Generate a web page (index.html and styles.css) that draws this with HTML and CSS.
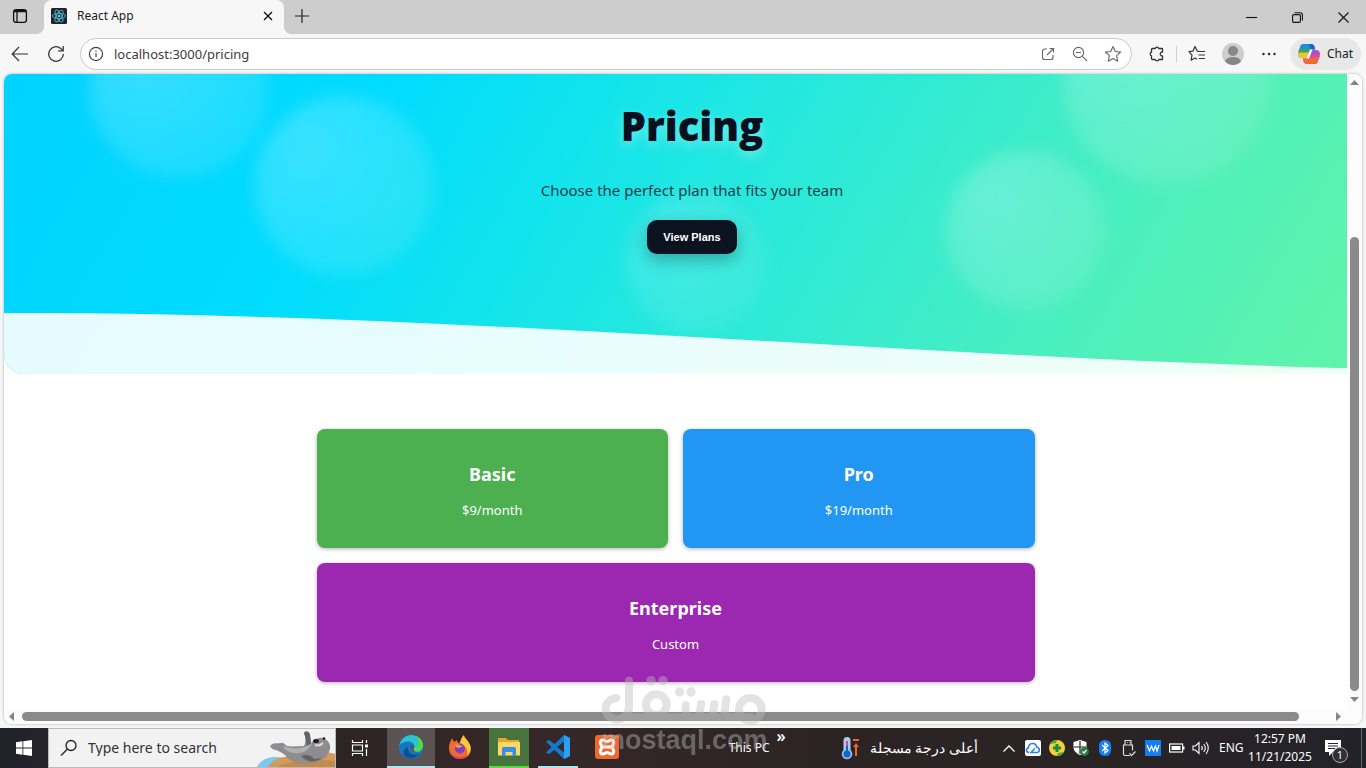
FILE: index.html
```html
<!DOCTYPE html>
<html lang="en">
<head>
<meta charset="utf-8">
<title>React App</title>
<link rel="stylesheet" href="styles.css">
</head>
<body>
<header class="tabstrip">
  <button class="tab-actions" aria-label="Tab actions">
    <svg width="16" height="16" viewBox="0 0 16 16" fill="none" stroke="#111" stroke-width="1.3"><rect x="1.6" y="1.6" width="12.8" height="12.8" rx="2.4"/><path d="M2 3.5h12M5 4v10" /><path d="M2 3h12" stroke-width="2"/></svg>
  </button>
  <div class="tab">
    <svg width="16" height="16" viewBox="0 0 16 16"><rect width="16" height="16" rx="1.5" fill="#20232a"/><g fill="none" stroke="#4fb6cf" stroke-width=".9"><ellipse cx="8" cy="8" rx="6.6" ry="2.6"/><ellipse cx="8" cy="8" rx="6.6" ry="2.6" transform="rotate(60 8 8)"/><ellipse cx="8" cy="8" rx="6.6" ry="2.6" transform="rotate(120 8 8)"/></g><circle cx="8" cy="8" r="1.3" fill="#61dafb"/></svg>
    <span class="tab-title">React App</span>
    <button class="tab-close" aria-label="Close tab"><svg width="10" height="10" viewBox="0 0 10 10" stroke="#111" stroke-width="1.4"><path d="M1 1l8 8M9 1L1 9"/></svg></button>
  </div>
  <button class="new-tab" aria-label="New tab"><svg width="14" height="14" viewBox="0 0 14 14" stroke="#222" stroke-width="1.2"><path d="M7 0v14M0 7h14"/></svg></button>
  <div class="window-buttons">
    <button aria-label="Minimize"><svg width="11" height="11" viewBox="0 0 11 11" stroke="#111" stroke-width="1.1"><path d="M0 5.5h11"/></svg></button>
    <button aria-label="Restore"><svg width="11" height="11" viewBox="0 0 11 11" fill="none" stroke="#111" stroke-width="1.1"><rect x=".6" y="2.6" width="7.8" height="7.8" rx="1.2"/><path d="M2.6 .8h5.6a2.2 2.2 0 0 1 2.2 2.2v5.4"/></svg></button>
    <button aria-label="Close"><svg width="11" height="11" viewBox="0 0 11 11" stroke="#111" stroke-width="1.1"><path d="M.5 .5l10 10M10.500 .5l-10 10"/></svg></button>
  </div>
</header>

<nav class="toolbar" aria-label="Browser toolbar">
  <button class="nav-button" aria-label="Back"><svg width="18" height="18" viewBox="0 0 18 18" fill="none" stroke="#333" stroke-width="1.2"><path d="M17 9H1.500M8 2L1.200 9L8 16"/></svg></button>
  <button class="nav-button" aria-label="Refresh"><svg width="18" height="18" viewBox="0 0 18 18" fill="none" stroke="#333" stroke-width="1.3"><path d="M16.300 9a7.300 7.300 0 1 1-2.600-5.600L16 5.600"/><path d="M16.200 1v4.900h-5"/></svg></button>
  <div class="address">
    <svg width="16" height="16" viewBox="0 0 16 16" fill="none" stroke="#444" stroke-width="1.200"><circle cx="8" cy="8" r="6.600"/><path d="M8 7v4.200M8 4.400v1.400"/></svg>
    <input class="address-input" type="text" aria-label="Address" value="localhost:3000/pricing">
    <button aria-label="Open in app"><svg width="16" height="16" viewBox="0 0 16 16" fill="none" stroke="#666" stroke-width="1.100"><path d="M7 3H4.500A2 2 0 0 0 2.500 5v6.500a2 2 0 0 0 2 2H11a2 2 0 0 0 2-2V9M9.500 2.500H13.500V6.500M13.500 2.500L7 9"/></svg></button>
    <button aria-label="Zoom"><svg width="16" height="16" viewBox="0 0 16 16" fill="none" stroke="#666" stroke-width="1.100"><circle cx="6.500" cy="6.500" r="5.100"/><path d="M4 6.500h5M10.300 10.300L15 15"/></svg></button>
    <button aria-label="Add to favorites"><svg width="18" height="18" viewBox="0 0 18 18" fill="none" stroke="#666" stroke-width="1.100" stroke-linejoin="round"><path d="M9 1.500l2.300 5 5.300.600-4 3.600 1.100 5.500L9 13.500l-4.700 2.700 1.100-5.500-4-3.600 5.300-.600z"/></svg></button>
  </div>
  <button class="tool" aria-label="Extensions"><svg width="18" height="18" viewBox="0 0 18 18" fill="none" stroke="#333" stroke-width="1.300" stroke-linejoin="round"><path d="M4.500 3.500h2.700a1.900 1.900 0 0 1 3.600 0h3.700v3.700h-1a1.900 1.900 0 0 0 0 3.600h1v3.700h-3.700a1.900 1.900 0 0 1-3.600 0H4.500a1 1 0 0 1-1-1v-2.700a1.900 1.900 0 0 1 0-3.600V4.500a1 1 0 0 1 1-1z"/></svg></button>
  <span class="divider"></span>
  <button class="tool" aria-label="Favorites"><svg width="18" height="18" viewBox="0 0 18 18" fill="none" stroke="#333" stroke-width="1.200" stroke-linejoin="round"><path d="M11.500 6.500L9.300 6.200 7 1.500 4.900 6.200 1 6.700l3 3.500-.9 5L7 13l2 1.200M11 6.500h6M10.500 10h6.500M11 13.500h6"/></svg></button>
  <button class="tool" aria-label="Profile"><svg width="22" height="22" viewBox="0 0 22 22"><circle cx="11" cy="11" r="11" fill="#cdcdcd"/><circle cx="11" cy="8" r="5" fill="#878787"/><path d="M3 18.500c1-6 15-6 16 0a11 11 0 0 1-16 0z" fill="#878787"/></svg></button>
  <button class="tool" aria-label="Settings and more"><svg width="14" height="4" viewBox="0 0 14 4" fill="#222"><circle cx="1.500" cy="2" r="1.200"/><circle cx="7" cy="2" r="1.200"/><circle cx="12.500" cy="2" r="1.200"/></svg></button>
  <button class="chat">
    <svg width="22" height="20" viewBox="0 0 22 20"><path d="M5.500 0H13c2 0 3 1 3.500 3l.7 2.500H13L10 14H4c-3.500 0-4.600-2.500-3.600-6L2 3C2.500 1 3.500 0 5.500 0z" fill="#1c8fd6"/><path d="M1.500 5h10.800l-1 3.500H.3z" fill="#35a65a"/><path d="M.3 8.500h11L9.700 14H4c-3 0-4.400-2-3.700-5.500z" fill="#efc42f"/><path d="M11 0h2c2 0 3 1 3.500 3l.7 2.500H13z" fill="#1268c4"/><path d="M16.500 20H9c-2 0-3-1-3.500-3L4.800 14.500H9L12 6h6c3.500 0 4.600 2.500 3.600 6L20 17c-.5 2-1.500 3-3.500 3z" fill="#b650c4"/><path d="M4.800 14.500H9l1-2.500h11.600L20 17c-.5 2-1.500 3-3.500 3H9c-2 0-3-1-3.500-3z" fill="#ef6a35"/><path d="M11 11.500h10.700l-.6 2.500H10z" fill="#e0508c"/><path d="M8.500 14.500l3.500-9h2.500L11 14.500z" fill="#fff"/></svg>
    Chat
  </button>
</nav>

<div class="frame">
  <div class="page">
    <section class="hero">
      <span class="bubble bubble-a"></span>
      <span class="bubble bubble-b"></span>
      <span class="bubble bubble-c"></span>
      <span class="bubble bubble-d"></span>
      <span class="bubble bubble-e"></span>
      <svg class="wave" viewBox="0 0 1376 61" preserveAspectRatio="none"><path d="M0 0C459 -1 917 46 1376 56V61H0z" fill="#fff" fill-opacity=".9"/></svg>
      <div class="hero-content">
        <h1 class="hero-title">Pricing</h1>
        <p class="hero-text">Choose the perfect plan that fits your team</p>
        <button class="hero-button">View Plans</button>
      </div>
    </section>
    <main class="plans">
      <article class="plan plan-basic"><h2 class="plan-name">Basic</h2><p class="plan-price">$9/month</p></article>
      <article class="plan plan-pro"><h2 class="plan-name">Pro</h2><p class="plan-price">$19/month</p></article>
      <article class="plan plan-enterprise"><h2 class="plan-name">Enterprise</h2><p class="plan-price">Custom</p></article>
    </main>
  </div>
  <div class="vbar">
    <svg width="9" height="5" viewBox="0 0 9 5" fill="#858585"><path d="M0 5L4.500 0L9 5z"/></svg>
    <div class="vtrack"><div class="vthumb"></div></div>
    <svg width="9" height="5" viewBox="0 0 9 5" fill="#858585"><path d="M0 0L4.500 5L9 0z"/></svg>
  </div>
  <div class="hbar">
    <svg width="5" height="9" viewBox="0 0 5 9" fill="#858585"><path d="M5 0L0 4.500L5 9z"/></svg>
    <div class="htrack"><div class="hthumb"></div></div>
    <svg width="5" height="9" viewBox="0 0 5 9" fill="#858585"><path d="M0 0L5 4.500L0 9z"/></svg>
  </div>
</div>

<footer class="taskbar">
  <button class="task-slot" aria-label="Start"><svg width="16" height="16" viewBox="0 0 16 16" fill="#fff"><path d="M0 2.200L6.500 1.300V7.600H0zM7.300 1.200L16 0V7.600H7.300zM0 8.400H6.500V14.700L0 13.800zM7.300 8.400H16V16L7.300 14.800z"/></svg></button>
  <label class="search">
    <svg width="18" height="18" viewBox="0 0 18 18" fill="none" stroke="#222" stroke-width="1.300"><circle cx="11" cy="6.500" r="5"/><path d="M7.300 10.200L1 16.500"/></svg>
    <input class="search-input" type="text" aria-label="Search" placeholder="Type here to search">
    <svg width="80" height="38" viewBox="0 0 80 38">
      <path d="M2 38c4-8 14-12 26-9l6 9z" fill="#7cc8ee"/><path d="M13 38c5-9 16-12 32-10 10-3 24-7 35-3v13z" fill="#d29a5c"/><path d="M22 38c10-6 38-8 58-6v6z" fill="#c38a48"/>
      <path d="M15 17c3-4 8-2 11-3 2-1 3 1 6 3 6 1 12 0 17 0 2-4 2-8 0-13 2-3 6-1 6 2l1 8c3-3 7-6 12-5 5 2 8 6 7 11-2 9-11 14-22 14-9 1-18-1-23-8-4-3-7-4-9-5-3 0-5-2-6-4z" fill="#8d8d8f"/>
      <path d="M28 17c10 4 22 3 29-3-3 8-10 11-17 10-6 0-10-3-12-7z" fill="#b0b0b1"/><path d="M49 4c2-3 6-1 6 2l1 8-4 3c-1-4-1-8-3-13z" fill="#626267"/><path d="M46 27c6-2 10-1 13 3l8-1c-6 4-14 6-21-2z" fill="#626267"/>
      <ellipse cx="61" cy="12" rx="3" ry="2" fill="#222"/><circle cx="69" cy="9.500" r="1.200" fill="#111"/><path d="M60 16c3 1 5 1 8-2" fill="none" stroke="#ead8cf" stroke-width="2"/>
    </svg>
  </label>
  <button class="task-slot" aria-label="Task view"><svg width="18" height="16" viewBox="0 0 18 16" fill="none" stroke="#fff" stroke-width="1.200"><path d="M1.500 0v2.500h10V0M1.500 16v-2.500h10V16M1.500 5h10v6h-10zM15.500 0v3M15.500 9v7"/><path d="M14 4.500h3v3h-3z" fill="#fff" stroke="none"/></svg></button>
  <div class="apps">
    <button class="app app-edge" aria-label="Microsoft Edge"><svg width="24" height="24" viewBox="0 0 24 24"><circle cx="12" cy="12" r="12" fill="#1577c9"/><path d="M.3 11C2 3 8-.5 14 .2c6 .8 10 5.300 10 10.300 0 4-3 6.500-7 6-3-.500-3-2-2-3.500 1.500-4-2-6.500-6-6.500C5 6.500 1.500 8 .3 11z" fill="#2cc3d5"/><path d="M17 1c4.500 2 7 5.500 7 9.500 0 4-3 6.500-7 6-2.500-.400-3-2-2-3.500 5 0 6-7 2-12z" fill="#55d84a"/><path d="M9 12c-1 5 4 9 10 7l2-1c-4 6-11 7-15 3-3-4-1-8 3-9z" fill="#124f8d"/><path d="M12 10c3 0 3.500 2 2.700 3.500-.7 1.500 0 2.700 1.500 3-3 .8-6-2-4.200-6.500z" fill="#5b5254"/></svg></button>
    <button class="app" aria-label="Firefox"><svg width="24" height="24" viewBox="0 0 24 24"><path d="M1 13C1 8 3 6 4 3l2 4 3-2c0 2 1 3 3 3 1-4 2-6 4-8 0 3 3 4 5 8 5 7 0 16-9 16C5 24 1 19 1 13z" fill="#f26a2e"/><path d="M16 0c0 3 3 4 5 8 3 5 1 10-2 13 1-5 0-8-3-10l-4-3c1-4 2-6 4-8z" fill="#ffc936"/><circle cx="12" cy="13.500" r="5" fill="#7a3fc4"/><path d="M7 10c3-2 5 0 8 1l-4 2c-2 0-4-1-4-3z" fill="#f9963a"/><path d="M3 18c4 5 12 6 17 1-3 6-14 7-17-1z" fill="#dd3678"/></svg></button>
    <button class="app app-files" aria-label="File Explorer"><svg width="22" height="20" viewBox="0 0 22 20"><path d="M0 1h8l2 2h11v15H0z" fill="#e8a52d"/><path d="M0 5h22v13.500H0z" fill="#fbd867"/><path d="M4 19v-7.500A1.500 1.500 0 0 1 5.500 10h11a1.500 1.500 0 0 1 1.500 1.500V19h-3.500v-4h-7v4z" fill="#3b8fe0"/></svg></button>
    <button class="app app-code" aria-label="Visual Studio Code"><svg width="24" height="24" viewBox="0 0 24 24"><path d="M18 0l6 3v18l-6 3L8.500 15 3 19l-3-1.500L5.500 12 0 6.500 3 5l5.500 4z" fill="#1479c9"/><path d="M18 0l6 3v18l-6 3z" fill="#2ba0f0"/><path d="M18 6.500v11L11 12z" fill="#342829"/></svg></button>
    <button class="app" aria-label="XAMPP"><svg width="24" height="24" viewBox="0 0 24 24"><rect width="24" height="24" rx="3" fill="#f2682a"/><path d="M6 5.500c3-2 4 1 6 1s3-3 6-1c2 2 0 4-1 6.500 1 2.500 3 4.500 1 6.500-3 2-4-1-6-1s-3 3-6 1c-2-2 0-4 1-6.500-1-2.500-3-4.500-1-6.500z" fill="none" stroke="#fff" stroke-width="3"/><path d="M8 12h8" stroke="#fff" stroke-width="3"/></svg></button>
  </div>
  <div class="desk-toolbar"><span>This PC</span><span class="more">»</span></div>
  <button class="weather"><svg width="20" height="24" viewBox="0 0 20 24"><rect x="2.500" y="1" width="7" height="17" rx="3.500" fill="#a9cdf2"/><circle cx="6" cy="18" r="5.300" fill="#8fbdf0"/><circle cx="6" cy="18" r="3.500" fill="#1466c0"/><path d="M5 8h2v9H5z" fill="#1466c0"/><path d="M5 5h2v5H5z" fill="#e8408a"/><path d="M12 3h6v2h-6zM15 7l3 4h-2v9h-2v-9h-2z" fill="#f2622c"/></svg><span lang="ar" dir="rtl">أعلى درجة مسجلة</span></button>
  <div class="tray">
    <button aria-label="Show hidden icons"><svg width="12" height="7" viewBox="0 0 12 7" fill="none" stroke="#fff" stroke-width="1.300"><path d="M.5 6.500L6 1l5.500 5.500"/></svg></button>
    <button aria-label="Cloud storage"><svg width="16" height="16" viewBox="0 0 16 16"><rect width="16" height="16" rx="2" fill="#fff"/><path d="M4 12.500c-3 0-3.500-4-.5-4.700C3.500 2.500 11 2 11.500 7c4 .5 3.500 5.500 0 5.500H6l4-4" fill="none" stroke="#2c7ee0" stroke-width="1.500"/></svg></button>
    <button aria-label="Updater"><svg width="16" height="16" viewBox="0 0 16 16"><circle cx="8" cy="8" r="8" fill="#f0d03c"/><path d="M1 4A8 8 0 0 1 8 0l-1 3zM15 12a8 8 0 0 1-7 4l1-3z" fill="#4aa83a"/><path d="M6.500 4h3v2.500H12v3H9.500V12h-3V9.500H4v-3h2.500z" fill="#218a35"/></svg></button>
    <button aria-label="Security"><svg width="16" height="16" viewBox="0 0 16 16"><path d="M7 0l6.500 2v5c0 4-3 6.500-6.500 8C3.500 13.500 .5 11 .5 7V2z" fill="#fff"/><path d="M7 1v13M1 7h12" stroke="#2a2225" stroke-width="1.200"/><circle cx="11.500" cy="11.500" r="4.400" fill="#238044"/><path d="M9.500 11.500l1.500 1.500 2.500-3" fill="none" stroke="#fff" stroke-width="1.200"/></svg></button>
    <button aria-label="Bluetooth"><svg width="12" height="16" viewBox="0 0 12 16"><rect width="12" height="16" rx="5.500" fill="#147ff0"/><path d="M3 5l6 5.500L6 13V3l3 2.500L3 11" fill="none" stroke="#fff" stroke-width="1.200"/></svg></button>
    <button aria-label="USB device"><svg width="14" height="18" viewBox="0 0 14 18" fill="none" stroke="#ddd" stroke-width="1.200"><path d="M3 6V1.500h6V6M5 3.500h.8M7 3.500h.8M8 16.500H3a1.500 1.500 0 0 1-1.500-1.500V6h9v5.500M7.500 14l2 2.500 4-4"/></svg></button>
    <button aria-label="W app"><svg width="16" height="16" viewBox="0 0 16 16"><rect width="16" height="16" fill="#147ff0"/><path d="M2 5l2.500 6 2-5 2 5 2-5 1.500 5L14 5" fill="none" stroke="#fff" stroke-width="1.200"/></svg></button>
    <button aria-label="Battery"><svg width="16" height="10" viewBox="0 0 16 10"><rect x=".6" y="1" width="13" height="8" fill="none" stroke="#fff" stroke-width="1.200"/><path d="M2.500 3h9v4h-9zM14 3.500h1.500v3H14z" fill="#fff"/></svg></button>
    <button aria-label="Volume"><svg width="18" height="14" viewBox="0 0 18 14" fill="none" stroke="#fff" stroke-width="1.100"><path d="M1 5h2.500L7 1.500v11L3.500 9H1zM9.500 5c1 1.200 1 2.800 0 4M11.700 3c2 2.500 2 5.500 0 8M14 1c3 3.500 3 8.500 0 12"/></svg></button>
  </div>
  <span class="lang">ENG</span>
  <time class="clock" datetime="2025-11-21T12:57"><span>12:57 PM</span><span>11/21/2025</span></time>
  <button class="notifications" aria-label="Notifications"><svg width="16" height="16" viewBox="0 0 16 16"><path d="M0 0h16v12H8l-4 4v-4H0z" fill="#fff"/><path d="M3 3.500h10M3 6h10M3 8.500h7" stroke="#28252a" stroke-width="1.100"/></svg><span class="badge">1</span></button>
  <span class="show-desktop"></span>
</footer>

<div class="watermark">
  <svg width="166" height="50" viewBox="0 0 498 150" fill="none" stroke="#bebebe" stroke-width="24" stroke-linecap="round" stroke-linejoin="round">
    <path d="M84 22V92C84 142 14 142 14 98C14 80 28 68 46 66M84 124H448M295 124L300 84M334 124L340 84M369 124L376 70M254 124V88"/>
    <circle cx="166" cy="86" r="31"/><circle cx="448" cy="100" r="34"/>
    <g fill="#bebebe" stroke="none"><circle cx="84" cy="14" r="12"/><circle cx="150" cy="14" r="14"/><circle cx="186" cy="14" r="14"/><circle cx="236" cy="48" r="14"/><circle cx="270" cy="48" r="14"/></g>
  </svg>
  <span>mostaql.com</span>
</div>
</body>
</html>
```
FILE: styles.css
```css
* { box-sizing: border-box; }
body {
  margin: 0;
  height: 100vh;
  display: flex;
  flex-direction: column;
  overflow: hidden;
  background: #f7f7f7;
  color: #1b1b1b;
  font: 12px/16px "Noto Sans", "Open Sans", sans-serif;
}
button {
  display: flex;
  align-items: center;
  justify-content: center;
  padding: 0;
  border: 0;
  background: none;
  color: inherit;
  font: inherit;
}
input { min-width: 0; padding: 0; border: 0; outline: 0; background: none; font: inherit; }
svg { flex: none; display: block; }

.tabstrip { flex: none; height: 34px; display: flex; background: #cdcdcd; }
.tab-actions { width: 44px; padding: 0 4px 2px 0; }
.tab {
  position: relative;
  width: 240px;
  display: flex;
  align-items: center;
  gap: 10px;
  padding: 0 11px 2px 7px;
  border-radius: 8px 8px 0 0;
  background: #f7f7f7;
}
.tab::before, .tab::after { content: ""; position: absolute; bottom: 0; width: 8px; height: 8px; }
.tab::before { left: -8px; background: radial-gradient(circle at 0 0, #cdcdcd 8px, #f7f7f7 8px); }
.tab::after { right: -8px; background: radial-gradient(circle at 100% 0, #cdcdcd 8px, #f7f7f7 8px); }
.tab-title { flex: 1; }
.new-tab { width: 36px; padding-bottom: 2px; }
.window-buttons { display: flex; margin-left: auto; }
.window-buttons button { width: 46px; }

.toolbar { flex: none; height: 40px; display: flex; align-items: center; padding-right: 5px; }
.nav-button { width: 36px; margin-left: 2px; }
.nav-button + .nav-button { margin-left: 0; }
.address {
  flex: 1;
  height: 32px;
  display: flex;
  align-items: center;
  gap: 16px;
  margin-left: 6px;
  padding: 0 9px 0 7px;
  border: 1px solid #cbcbcb;
  border-radius: 16px;
  background: #fff;
}
.address-input { flex: 1; margin-left: -6px; color: #3c3c3c; font-size: 13px; }
.tool { width: 36px; }
.address + .tool { width: 38px; margin-left: 6px; }
.divider { width: 1px; height: 16px; margin-right: 2px; background: #cfcfcf; }
.chat { width: 71px; height: 32px; gap: 7px; margin-left: 3px; border-radius: 16px; background: #e8e8e8; }

.frame {
  flex: 1;
  min-height: 0;
  display: grid;
  grid-template: 1fr 15px / 1fr 15px;
  margin: 0 4px 4px;
  border-radius: 8px;
  overflow: hidden;
  background: #fff;
  box-shadow: 0 0 3px rgba(0, 0, 0, .3);
}
.page { min-width: 0; min-height: 0; overflow: hidden; background: #fff; }
.vbar, .hbar { display: flex; align-items: center; background: #fcfcfc; }
.vbar { flex-direction: column; padding: 6px 0 7px; }
.hbar { grid-column: 1 / -1; padding: 0 21px 0 5px; }
.vtrack { flex: 1; width: 9px; margin: 7px 0 6px; padding-top: 145px; }
.vthumb { height: 100%; border-radius: 5px; background: #8a8a8a; }
.htrack { flex: 1; height: 9px; margin: 0 8px; padding-right: 29px; }
.hthumb { height: 100%; border-radius: 5px; background: #8a8a8a; }

.hero {
  position: relative;
  width: calc(100% + 33px);
  padding: 24px 0 120px;
  overflow: hidden;
  border-radius: 0 0 20px 20px;
  background: linear-gradient(120deg, #00d2ff 0%, #00dcff 25%, #10e3ee 38%, #2eead6 58%, #50f0b9 82%, #5ff4aa 97%);
}
.bubble {
  position: absolute;
  border-radius: 50%;
  background: radial-gradient(circle at 30% 30%, rgba(255, 255, 255, .22), rgba(255, 255, 255, .07));
  filter: blur(8px);
}
.bubble-a { left: 85px; top: -76px; width: 180px; height: 180px; }
.bubble-b { left: 250px; top: 22px; width: 180px; height: 180px; }
.bubble-c { left: 622px; top: 118px; width: 140px; height: 140px; opacity: .7; }
.bubble-d { left: 941px; top: 76px; width: 160px; height: 160px; }
.bubble-e { left: 1058px; top: -99px; width: 210px; height: 210px; }
.wave { position: absolute; left: 0; bottom: 0; width: 100%; height: 61px; }
.hero-content { position: relative; display: flex; flex-direction: column; align-items: center; }
.hero-title {
  margin: 0;
  color: #081020;
  font-family: "Open Sans", "Noto Sans", sans-serif;
  font-size: 40px;
  font-weight: 800;
  line-height: 56px;
  text-shadow: 0 4px 12px rgba(255, 255, 255, .35);
}
.hero-text { margin: 24px 0 18px; color: #16404b; font-size: 15px; line-height: 24px; }
.hero-button {
  height: 34px;
  padding: 0 16px;
  border-radius: 10px;
  background: #0b1220;
  box-shadow: 0 6px 16px rgba(11, 18, 32, .3);
  color: #fff;
  font: bold 11px "Liberation Sans", Arial, sans-serif;
}

.plans { display: grid; grid-template-columns: 1fr 1fr; gap: 15px; max-width: 718px; margin: 55px auto 0; }
.plan {
  padding: 31px 20px 28px;
  border-radius: 8px;
  box-shadow: 0 1px 4px rgba(0, 0, 0, .3);
  color: #fff;
  text-align: center;
}
.plan-basic { background: #4caf50; }
.plan-pro { background: #2196f3; }
.plan-enterprise { grid-column: 1 / -1; background: #9c27b0; }
.plan-name { margin: 0 0 12px; font-size: 18px; font-weight: 700; line-height: 28px; }
.plan-price { margin: 0; font-size: 13px; line-height: 20px; }

.taskbar {
  flex: none;
  height: 40px;
  display: flex;
  background: linear-gradient(90deg, #22222a, #2d2424 26%, #362828 38%, #2c2424 60%, #2a2424 80%, #222229);
  color: #fff;
}
.task-slot { width: 48px; }
.search {
  width: 288px;
  display: flex;
  align-items: center;
  gap: 10px;
  padding-left: 11px;
  border: 1px solid #bbb;
  background: #f2f2f2;
  color: #222;
}
.search-input { flex: 1; font-size: 14px; }
.search-input::placeholder { color: #333; opacity: 1; }
.apps { display: flex; margin-left: 3px; gap: 1px; }
.app { width: 48px; border-bottom: 2px solid transparent; }
.app-edge { background: #5b5254; border-color: #a9e6f0; }
.app-files { width: 40px; margin: 0 4px; background: #47733c; border-color: #55dd3f; }
.app-code { width: 40px; margin: 0 4px; border-color: #a9e6f0; }
.desk-toolbar { display: flex; align-items: center; gap: 7px; margin-left: auto; }
.more { align-self: flex-start; font-size: 16px; font-weight: 600; }
.weather { gap: 9px; margin: 0 19px 0 55px; font-size: 14px; }
.tray { display: flex; }
.tray button { width: 24px; }
.lang { align-self: center; margin-left: 6px; width: 28px; }
.clock { display: flex; flex-direction: column; justify-content: center; width: 66px; line-height: 18px; text-align: center; }
.notifications { position: relative; width: 40px; }
.badge {
  position: absolute;
  left: 19px;
  top: 19px;
  width: 16px;
  height: 16px;
  border: 1px solid #aaa;
  border-radius: 50%;
  background: #342f32;
  font-size: 11px;
  line-height: 14px;
}
.show-desktop { width: 5px; margin-left: 8px; border-left: 1px solid #66666b; }

.watermark {
  position: absolute;
  left: 44%;
  bottom: 14px;
  display: flex;
  flex-direction: column;
  align-items: center;
  opacity: .42;
  color: #bebebe;
  font: bold 27px/28px "Liberation Sans", Arial, sans-serif;
  pointer-events: none;
}
```
